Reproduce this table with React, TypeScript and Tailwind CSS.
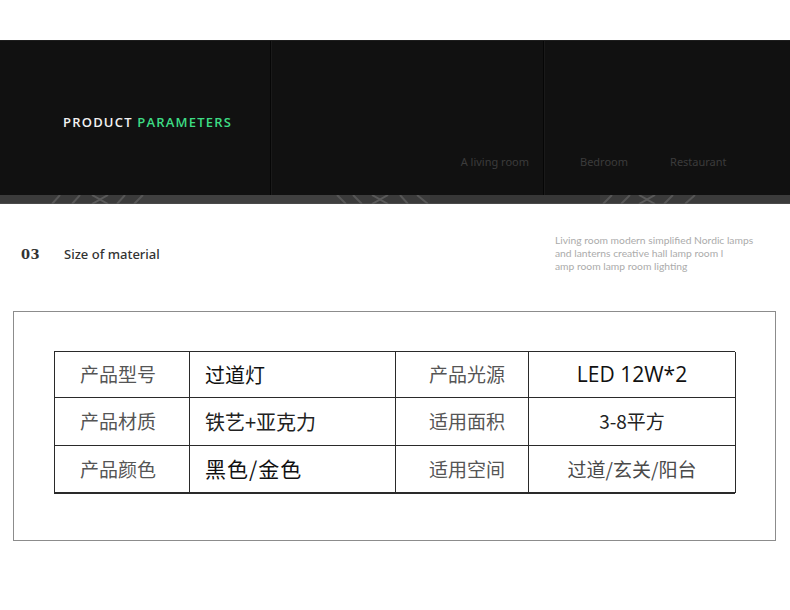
import React from "react";

const cjk = { fontFamily: '"Noto Sans CJK SC", "Noto Sans", sans-serif' };

function Strip() {
  const marks: [number, number][] = [
    [60, 52], [80, 72], [125, 117], [143, 134],
    [337, 346], [353, 362], [400, 408], [417, 428],
    [612, 603], [630, 621], [673, 664], [695, 685],
  ];
  const xs = [100, 380, 647];
  return (
    <svg width="790" height="9" viewBox="0 0 790 9" className="block">
      <rect x="0" y="0" width="790" height="9" fill="#3b3b3b" />
      <rect x="0" y="8" width="790" height="1" fill="#4a4a4a" />
      <rect x="140" y="0" width="200" height="8" fill="#404040" />
      <rect x="430" y="0" width="170" height="8" fill="#373737" />
      {marks.map(([x1, x2], i) => (
        <line key={i} x1={x1} y1={0} x2={x2} y2={9} stroke="#575757" strokeWidth="2" />
      ))}
      {xs.map((c, i) => (
        <g key={"x" + i} stroke="#5a5a5a" strokeWidth="2">
          <line x1={c - 8} y1={0} x2={c + 8} y2={9} />
          <line x1={c + 8} y1={0} x2={c - 8} y2={9} />
        </g>
      ))}
    </svg>
  );
}

function Cell({
  children,
  className = "",
}: {
  children: React.ReactNode;
  className?: string;
}) {
  return <div className={"flex items-center border-r border-b border-[#2a2a2a] " + className}>{children}</div>;
}

const navFont = { fontFamily: '"Noto Sans", sans-serif' };

export default function App() {
  const rows = [
    { h: "h-[46px]", a: "产品型号", b: "过道灯", bCls: "text-[20px] text-[#111]", c: "产品光源", d: "LED 12W*2", dCls: "text-[21px] text-[#111]", dFont: '"Open Sans", "Noto Sans CJK SC", sans-serif' },
    { h: "h-[48px]", a: "产品材质", b: "铁艺+亚克力", bCls: "text-[20px] text-[#222]", c: "适用面积", d: "3-8平方", dCls: "text-[19px] text-[#222]", dFont: '"Noto Sans CJK SC", sans-serif' },
    { h: "h-[47px]", a: "产品颜色", b: "黑色/金色", bCls: "text-[21px] text-[#111] tracking-[1px]", c: "适用空间", d: "过道/玄关/阳台", dCls: "text-[19px] text-[#4a4a4a]", dFont: '"Noto Sans CJK SC", sans-serif' },
  ];
  return (
    <div className="w-[790px] h-[610px] bg-white overflow-hidden" style={cjk}>
      <div className="h-[40px]" />
      {/* banner */}
      <div className="bg-[#111111] h-[155px] flex border-t border-[#1e1e1e]">
        <div className="w-[270px] h-full flex items-center pl-[63px] pt-[9px]">
          <div
            className="text-[13px] font-semibold tracking-[1.2px] leading-none"
            style={{ fontFamily: '"Open Sans", "Noto Sans", sans-serif' }}
          >
            <span className="text-[#f2f2f2]">PRODUCT </span>
            <span className="text-[#3ddc84]">PARAMETERS</span>
          </div>
        </div>
        <div className="w-px h-full bg-[#060606]" />
        <div className="w-px h-full bg-[#1a1a1a]" />
        <div className="w-[271px] h-full flex items-end justify-end pr-[14px] pb-[28px]">
          <span className="text-[11px] text-[#3c3c3c] leading-none" style={navFont}>
            A living room
          </span>
        </div>
        <div className="w-px h-full bg-[#060606]" />
        <div className="w-px h-full bg-[#1a1a1a]" />
        <div className="flex-1 h-full flex items-end pl-[35px] pb-[28px] gap-[42px]">
          <span className="text-[11px] text-[#3c3c3c] leading-none" style={navFont}>
            Bedroom
          </span>
          <span className="text-[11px] text-[#3c3c3c] leading-none" style={navFont}>
            Restaurant
          </span>
        </div>
      </div>
      <Strip />
      {/* section header */}
      <div className="h-[107px] flex">
        <div className="flex items-center h-[16px] mt-[43px] pl-[21px]">
          <span
            className="text-[13px] font-bold text-[#333] w-[43px] tracking-[0.5px]"
            style={{ fontFamily: '"DejaVu Serif", serif' }}
          >
            03
          </span>
          <span className="text-[13px] font-medium text-[#333]" style={navFont}>
            Size of material
          </span>
        </div>
        <div
          className="ml-auto mr-[30px] pt-[30px] text-[10.3px] leading-[13px] text-[#ababab] w-[205px]"
          style={{ fontFamily: '"Lato", sans-serif' }}
        >
          Living room modern simplified Nordic lamps
          <br />
          and lanterns creative hall lamp room l
          <br />
          amp room lamp room lighting
        </div>
      </div>
      {/* box */}
      <div className="ml-[13px] w-[763px] h-[230px] border border-[#8c8c8c] pt-[39px] pl-[40px]">
        <div className="w-[681px] border-l border-t border-[#2a2a2a] grid grid-cols-[135px_206px_133px_207px] border-b">
          {rows.map((r, i) => (
            <React.Fragment key={i}>
              <Cell className={r.h + " pl-[25px] text-[19px] text-[#555]"}>{r.a}</Cell>
              <Cell className={r.h + " pl-[15px] " + r.bCls}>{r.b}</Cell>
              <Cell className={r.h + " justify-center pl-[10px] text-[19px] text-[#555]"}>{r.c}</Cell>
              <Cell className={r.h + " justify-center " + r.dCls}>
                <span style={{ fontFamily: r.dFont }}>{r.d}</span>
              </Cell>
            </React.Fragment>
          ))}
        </div>
      </div>
    </div>
  );
}
